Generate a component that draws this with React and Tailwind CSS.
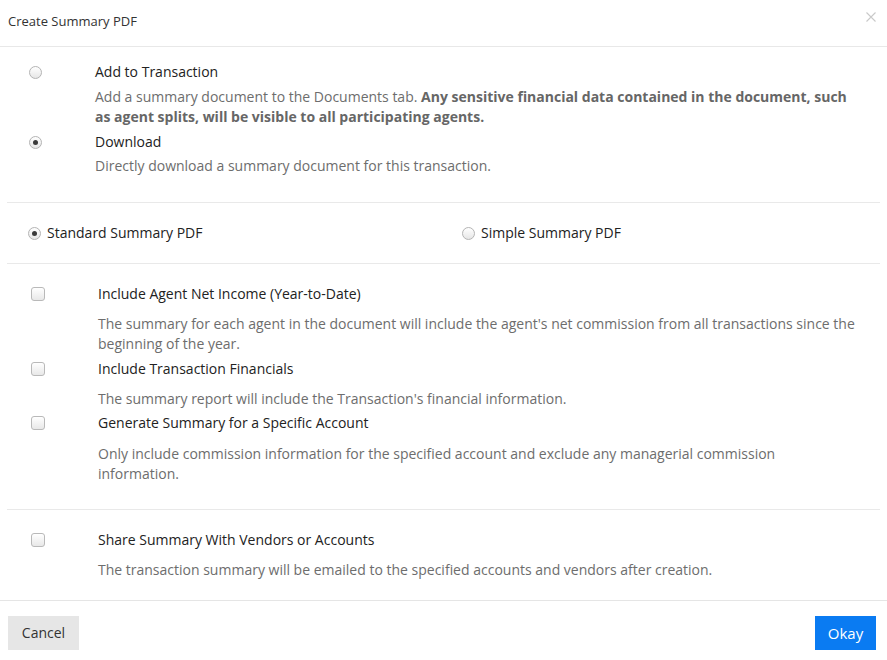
import React, { useState } from 'react';

const Radio = ({ checked, onClick }) => (
    <span
        onClick={onClick}
        className="w-[13px] h-[13px] rounded-full border border-[#b4b4b4] bg-gradient-to-b from-white to-[#e6e6e6] flex items-center justify-center cursor-pointer shrink-0"
    >
        {checked && <span className="w-[5px] h-[5px] rounded-full bg-[#3a3a3a]"></span>}
    </span>
);

const Checkbox = ({ checked, onClick }) => (
    <span
        onClick={onClick}
        className="w-[14px] h-[14px] rounded-[3px] border border-[#b9b9b9] bg-gradient-to-b from-white to-[#e8e8e8] flex items-center justify-center cursor-pointer shrink-0"
    >
        {checked && (
            <svg width="10" height="10" viewBox="0 0 10 10">
                <path d="M1.5 5.2 L4 7.6 L8.6 2.4" fill="none" stroke="#333" strokeWidth="1.6" />
            </svg>
        )}
    </span>
);

const OPTIONS = [
    {
        id: 'net',
        label: 'Include Agent Net Income (Year-to-Date)',
        desc: "The summary for each agent in the document will include the agent's net commission from all transactions since the beginning of the year.",
        top: '',
        gap: 'mt-[10px]',
    },
    {
        id: 'fin',
        label: 'Include Transaction Financials',
        desc: "The summary report will include the Transaction's financial information.",
        top: 'mt-[5px]',
        gap: 'mt-[10px]',
    },
    {
        id: 'account',
        label: 'Generate Summary for a Specific Account',
        desc: 'Only include commission information for the specified account and exclude any managerial commission information.',
        top: 'mt-[4px]',
        gap: 'mt-[11px]',
    },
];

export default function App() {
    const [dest, setDest] = useState('download');
    const [kind, setKind] = useState('standard');
    const [opts, setOpts] = useState({});

    const toggle = (id) => setOpts((o) => ({ ...o, [id]: !o[id] }));

    return (
        <div className="w-[887px] h-[660px] bg-white text-[14px] leading-[20px] text-[#333]" style={{ fontFamily: '"Open Sans", "Liberation Sans", sans-serif' }}>
            {/* Header */}
            <div className="h-[47px] border-b border-[#e8e8e8] flex items-center justify-between pl-2 pr-[11px] pb-[4px]">
                <span className="text-[13px] text-[#333]">Create Summary PDF</span>
                <svg width="10" height="10" viewBox="0 0 10 10" className="mb-[8px]">
                    <path d="M0.5 0.5 L9.5 9.5 M9.5 0.5 L0.5 9.5" stroke="#c9c9c9" strokeWidth="1.1" />
                </svg>
            </div>

            {/* Destination */}
            <div className="mx-[7px] border-b border-[#e9e9e9] pt-[15px] pb-[26px] pl-[22px] pr-[24px]">
                <div className="grid grid-cols-[66px_1fr] items-center">
                    <Radio checked={dest === 'add'} onClick={() => setDest('add')} />
                    <span className="text-[#222]">Add to Transaction</span>
                    <span></span>
                    <p className="mt-[5px] text-[#6d6d6d]">
                        Add a summary document to the Documents tab.{' '}
                        <b className="font-bold text-[#666]">Any sensitive financial data contained in the document, such as agent splits, will be visible to all participating agents.</b>
                    </p>
                    <span className="mt-[5px]">
                        <Radio checked={dest === 'download'} onClick={() => setDest('download')} />
                    </span>
                    <span className="mt-[5px] text-[#222]">Download</span>
                    <span></span>
                    <p className="mt-[4px] text-[#6d6d6d]">Directly download a summary document for this transaction.</p>
                </div>
            </div>

            {/* Kind */}
            <div className="mx-[7px] border-b border-[#e9e9e9] py-5 pl-[21px] flex items-center">
                <label className="w-[434px] flex items-center gap-[6px] cursor-pointer" onClick={() => setKind('standard')}>
                    <Radio checked={kind === 'standard'} />
                    <span className="text-[#222]">Standard Summary PDF</span>
                </label>
                <label className="flex items-center gap-[6px] cursor-pointer" onClick={() => setKind('simple')}>
                    <Radio checked={kind === 'simple'} />
                    <span className="text-[#222]">Simple Summary PDF</span>
                </label>
            </div>

            {/* Options */}
            <div className="mx-[7px] border-b border-[#e9e9e9] pt-[20px] pb-[25px] pl-[24px] pr-[24px]">
                {OPTIONS.map((o) => (
                    <div key={o.id} className={`grid grid-cols-[67px_1fr] items-center ${o.top}`}>
                        <Checkbox checked={!!opts[o.id]} onClick={() => toggle(o.id)} />
                        <span className="text-[#222]">{o.label}</span>
                        <span></span>
                        <p className={`${o.gap} text-[#6d6d6d]`}>{o.desc}</p>
                    </div>
                ))}
            </div>

            {/* Share */}
            <div className="mx-[7px] pt-[20px] pb-[20px] pl-[24px] pr-[24px]">
                <div className="grid grid-cols-[67px_1fr] items-center">
                    <Checkbox checked={!!opts.share} onClick={() => toggle('share')} />
                    <span className="text-[#222]">Share Summary With Vendors or Accounts</span>
                    <span></span>
                    <p className="mt-[10px] text-[#6d6d6d]">The transaction summary will be emailed to the specified accounts and vendors after creation.</p>
                </div>
            </div>

            {/* Footer */}
            <div className="border-t border-[#e5e5e5] pt-[15px] px-2 flex justify-between">
                <button className="h-[34px] w-[71px] bg-[#e6e6e6] text-[#333] text-[14px]">Cancel</button>
                <button className="h-[34px] w-[61px] mr-[3px] bg-[#0a7bf2] text-white text-[15px]">Okay</button>
            </div>
        </div>
    );
}
